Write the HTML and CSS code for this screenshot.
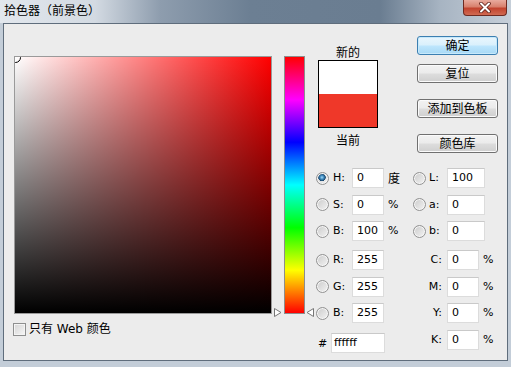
FILE: index.html
```html
<!DOCTYPE html>
<html lang="zh-CN">
<head>
  <meta charset="UTF-8">
  <title>拾色器（前景色）</title>
  <link rel="stylesheet" href="styles.css">
</head>
<body>
  <div class="window">
    <div class="titlebar">
      <span class="title">拾色器（前景色）</span>
      <div class="close">
        <svg width="14" height="11" viewBox="0 0 14 11">
          <path d="M3 1.5 L11 9.5 M11 1.5 L3 9.5" stroke="#5a1e16" stroke-width="3.6" stroke-linecap="round"/>
          <path d="M3 1.5 L11 9.5 M11 1.5 L3 9.5" stroke="#fff" stroke-width="2" stroke-linecap="round"/>
        </svg>
      </div>
    </div>

    <div class="client">
      <div class="picker">
        <div class="field"><span class="cursor"></span></div>
        <label class="webonly"><span class="check"></span>只有 Web 颜色</label>
      </div>

      <div class="hue">
        <svg class="arrow arrow-l" width="8" height="9" viewBox="0 0 8 9"><path d="M0.5 0.5 L7 4.5 L0.5 8.5 Z" fill="#fff" stroke="#777"/></svg>
        <svg class="arrow arrow-r" width="8" height="9" viewBox="0 0 8 9"><path d="M7.5 0.5 L1 4.5 L7.5 8.5 Z" fill="#fff" stroke="#777"/></svg>
      </div>

      <div class="panel">
        <div class="top">
          <div class="preview">
            <span class="cap">新的</span>
            <div class="swatch"></div>
            <span class="cap cap-low">当前</span>
          </div>
          <div class="buttons">
            <div class="btn btn-default">确定</div>
            <div class="btn btn-reset">复位</div>
            <div class="btn btn-far">添加到色板</div>
            <div class="btn btn-far">颜色库</div>
          </div>
        </div>

        <div class="fields">
          <div class="col col-left">
            <div class="group">
              <div class="row"><span class="radio on"></span><span class="lbl">H:</span><span class="inp">0</span><span class="unit cjk">度</span></div>
              <div class="row"><span class="radio"></span><span class="lbl">S:</span><span class="inp">0</span><span class="unit">%</span></div>
              <div class="row"><span class="radio"></span><span class="lbl">B:</span><span class="inp">100</span><span class="unit">%</span></div>
            </div>
            <div class="group">
              <div class="row"><span class="radio"></span><span class="lbl">R:</span><span class="inp">255</span></div>
              <div class="row"><span class="radio"></span><span class="lbl">G:</span><span class="inp">255</span></div>
              <div class="row"><span class="radio"></span><span class="lbl">B:</span><span class="inp">255</span></div>
            </div>
            <div class="row hex"><span class="hash">#</span><span class="inp inp-hex">ffffff</span></div>
          </div>

          <div class="col col-right">
            <div class="group">
              <div class="row"><span class="radio"></span><span class="lbl lbl-lab">L:</span><span class="inp inp-lab">100</span></div>
              <div class="row"><span class="radio"></span><span class="lbl lbl-lab">a:</span><span class="inp inp-lab">0</span></div>
              <div class="row"><span class="radio"></span><span class="lbl lbl-lab">b:</span><span class="inp inp-lab">0</span></div>
            </div>
            <div class="group group-cmyk">
              <div class="row"><span class="lbl lbl-cmyk">C:</span><span class="inp">0</span><span class="unit unit-cmyk">%</span></div>
              <div class="row"><span class="lbl lbl-cmyk">M:</span><span class="inp">0</span><span class="unit unit-cmyk">%</span></div>
              <div class="row"><span class="lbl lbl-cmyk">Y:</span><span class="inp">0</span><span class="unit unit-cmyk">%</span></div>
              <div class="row"><span class="lbl lbl-cmyk">K:</span><span class="inp">0</span><span class="unit unit-cmyk">%</span></div>
            </div>
          </div>
        </div>
      </div>
    </div>
  </div>
</body>
</html>
```

FILE: styles.css
```css
* {
  box-sizing: border-box;
}

body {
  margin: 0;
  width: 511px;
  height: 367px;
  overflow: hidden;
  background: #c3cdd8;
  color: #000;
  font-family: "DejaVu Sans", "Noto Sans CJK SC", sans-serif;
  font-size: 11px;
}

.window {
  display: flex;
  flex-direction: column;
  height: 367px;
}

/* title bar, aero style */
.titlebar {
  position: relative;
  height: 23px;
  display: flex;
  align-items: center;
  padding-left: 4px;
  background: linear-gradient(to right, #e2e7ed 0, #d3dae2 95px, #8e9dae 160px, #6c7f93 250px, #6a7d91 380px, #a7b4c2 440px, #c6cfd9 511px);
}

.title {
  font-family: "Noto Sans CJK SC", sans-serif;
  font-size: 12px;
  line-height: 14px;
  margin-top: -3px;
}

.close {
  position: absolute;
  top: 0;
  right: 4px;
  width: 44px;
  height: 16px;
  border: 1px solid #6e2a21;
  border-top: none;
  border-radius: 0 0 4px 4px;
  background: linear-gradient(#e9ab9e 0, #d8806d 45%, #c2432e 55%, #d06a52 100%);
  display: flex;
  align-items: center;
  justify-content: center;
}

/* dialog body */
.client {
  flex: 1;
  margin: 0 3px 6px;
  border: 1px solid #5f6d7c;
  background: #ececec;
  display: flex;
  align-items: flex-start;
  padding: 12px 0 0 10px;
}

.picker {
  margin-top: 20px;
}

.field {
  position: relative;
  overflow: hidden;
  width: 258px;
  height: 258px;
  border: 1px solid #9a9a9a;
  background:
    linear-gradient(to top, #000, rgba(0, 0, 0, 0)),
    linear-gradient(to right, #fff, #f00);
}

.cursor {
  position: absolute;
  left: -5px;
  top: -5px;
  width: 11px;
  height: 11px;
  border-radius: 50%;
  border: 1px solid #000;
}

.webonly {
  display: flex;
  align-items: center;
  gap: 3px;
  margin: 8px 0 0 -1px;
  font-size: 12px;
  line-height: 14px;
}

.check {
  width: 13px;
  height: 13px;
  border: 1px solid #8e8f8f;
  background: linear-gradient(135deg, #d4d4d4, #f7f7f7);
  box-shadow: inset 0 0 0 1px #f4f4f4;
}

.hue {
  position: relative;
  margin: 20px 0 0 12px;
  width: 21px;
  height: 258px;
  border: 1px solid #8d8d8d;
  background: linear-gradient(to bottom, #f00 0%, #f0f 16.7%, #00f 33.3%, #0ff 50%, #0f0 66.7%, #ff0 83.3%, #f00 100%);
}

.arrow {
  position: absolute;
  top: 251px;
}

.arrow-l {
  left: -11px;
}

.arrow-r {
  left: 21px;
}

.panel {
  margin-left: 11px;
}

.top {
  display: flex;
  align-items: flex-start;
}

.preview {
  width: 60px;
  margin: 9px 0 0 2px;
  display: flex;
  flex-direction: column;
  align-items: center;
}

.cap {
  font-family: "Noto Sans CJK SC", sans-serif;
  font-size: 12px;
  line-height: 14px;
}

.cap-low {
  margin-top: 5px;
}

.swatch {
  margin-top: 1px;
  width: 60px;
  height: 68px;
  border: 1px solid #000;
  background: linear-gradient(#fff 0, #fff 33px, #ef3829 33px);
}

.buttons {
  margin-left: 39px;
  display: flex;
  flex-direction: column;
}

.btn {
  width: 81px;
  height: 19px;
  border: 1px solid #707070;
  border-radius: 3px;
  background: linear-gradient(#f2f2f2 0, #ebebeb 48%, #dddddd 52%, #cfcfcf 100%);
  box-shadow: inset 0 0 0 1px #fbfbfb;
  font-family: "Noto Sans CJK SC", sans-serif;
  font-size: 12px;
  line-height: 16px;
  text-align: center;
}

.btn-default {
  border-color: #3c7fb1;
  background: linear-gradient(#eaf6fd 0, #d9f0fc 48%, #bee6fd 52%, #a7d9f5 100%);
  box-shadow: inset 0 0 0 1px #c7e9fb;
}

.btn-reset {
  margin-top: 9px;
}

.btn-far {
  margin-top: 16px;
}

/* numeric fields */
.fields {
  display: flex;
  margin-top: 15px;
}

.col {
  display: flex;
  flex-direction: column;
  gap: 9px;
}

.col-left {
  width: 97px;
}

.group {
  display: flex;
  flex-direction: column;
  gap: 6.5px;
}

.row {
  display: flex;
  align-items: center;
  height: 20px;
}

.radio {
  width: 13px;
  height: 13px;
  flex: none;
  border-radius: 50%;
  border: 1px solid #929292;
  background: linear-gradient(135deg, #cbcbcb, #f3f3f3);
  box-shadow: inset 0 0 0 1px #f6f6f6;
}

.radio.on {
  background:
    radial-gradient(circle at 45% 40%, #9fdcfb 0, #3b84b8 2px, #1b476c 3.5px, rgba(0, 0, 0, 0) 4px),
    linear-gradient(135deg, #cbcbcb, #f3f3f3);
}

.lbl {
  width: 23px;
  padding-left: 4px;
  line-height: 14px;
}

.lbl-lab {
  width: 21px;
  padding-left: 3px;
}

.lbl-cmyk {
  width: 34px;
  padding-right: 5px;
  text-align: right;
}

.inp {
  width: 32px;
  height: 20px;
  border: 1px solid #dcdcdc;
  border-top-color: #c9c9c9;
  background: #fff;
  padding-left: 4px;
  line-height: 18px;
}

.inp-lab {
  width: 38px;
}

.inp-hex {
  width: 54px;
  padding-left: 2px;
}

.unit {
  margin-left: 4px;
  line-height: 14px;
}

.unit-cmyk {
  margin-left: 4px;
}

.cjk {
  font-family: "Noto Sans CJK SC", sans-serif;
  font-size: 12px;
}

.hex {
  margin-top: 1px;
  padding-left: 2px;
}

.hash {
  width: 13px;
}
```
